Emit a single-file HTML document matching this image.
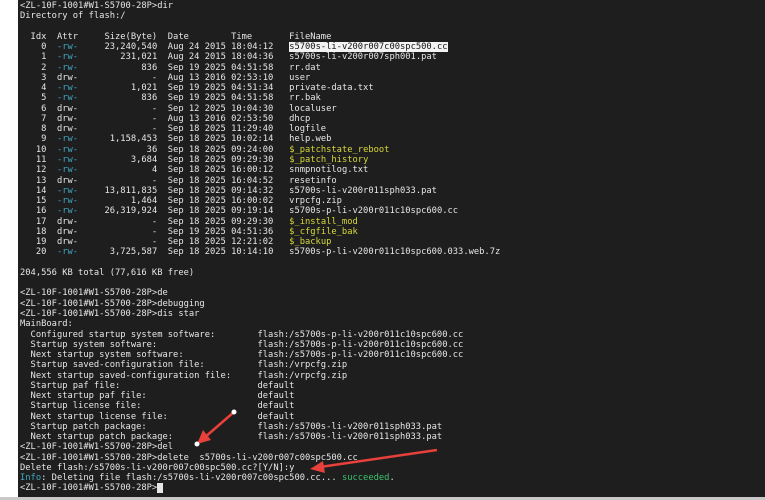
<!DOCTYPE html>
<html><head><meta charset="utf-8"><style>
html,body{margin:0;padding:0;}
body{width:765px;height:500px;overflow:hidden;position:relative;background:#1e1e1e;}
.l{position:absolute;left:0;top:0;width:18px;height:500px;background:#fff;}
.b{position:absolute;left:0;top:497px;width:765px;height:3px;background:#c8c8c8;}
pre{position:absolute;left:20px;top:1px;margin:0;font-family:"DejaVu Sans Mono","Liberation Mono",monospace;font-size:8.77px;line-height:10.26px;color:#e6e6e6;}
.c{color:#3fa7c0}.y{color:#d7d73a}.g{color:#3cc06a}
.h{background:#f2f2f2;color:#111}
.cur{background:#e6e6e6;}
svg{position:absolute;left:0;top:0;}
</style></head><body>
<div class="l"></div><div class="b"></div>
<pre>&lt;ZL-10F-1001#W1-S5700-28P&gt;dir
Directory of flash:/

  Idx  Attr     Size(Byte)  Date        Time       FileName
    0  <span class="c">-rw-</span>     23,240,540  Aug 24 2015 18:04:12   <span class="h">s5700s-li-v200r007c00spc500.cc</span>
    1  <span class="c">-rw-</span>        231,021  Aug 24 2015 18:04:36   s5700s-li-v200r007sph001.pat
    2  <span class="c">-rw-</span>            836  Sep 19 2025 04:51:58   rr.dat
    3  drw-              -  Aug 13 2016 02:53:10   user
    4  <span class="c">-rw-</span>          1,021  Sep 19 2025 04:51:34   private-data.txt
    5  <span class="c">-rw-</span>            836  Sep 19 2025 04:51:58   rr.bak
    6  drw-              -  Sep 12 2025 10:04:30   localuser
    7  drw-              -  Aug 13 2016 02:53:50   dhcp
    8  drw-              -  Sep 18 2025 11:29:40   logfile
    9  <span class="c">-rw-</span>      1,158,453  Sep 18 2025 10:02:14   help.web
   10  <span class="c">-rw-</span>             36  Sep 18 2025 09:24:00   <span class="y">$_patchstate_reboot</span>
   11  <span class="c">-rw-</span>          3,684  Sep 18 2025 09:29:30   <span class="y">$_patch_history</span>
   12  <span class="c">-rw-</span>              4  Sep 18 2025 16:00:12   snmpnotilog.txt
   13  drw-              -  Sep 18 2025 16:04:52   resetinfo
   14  <span class="c">-rw-</span>     13,811,835  Sep 18 2025 09:14:32   s5700s-li-v200r011sph033.pat
   15  <span class="c">-rw-</span>          1,464  Sep 18 2025 16:00:02   vrpcfg.zip
   16  <span class="c">-rw-</span>     26,319,924  Sep 18 2025 09:19:14   s5700s-p-li-v200r011c10spc600.cc
   17  drw-              -  Sep 18 2025 09:29:30   <span class="y">$_install_mod</span>
   18  drw-              -  Sep 19 2025 04:51:36   <span class="y">$_cfgfile_bak</span>
   19  drw-              -  Sep 18 2025 12:21:02   <span class="y">$_backup</span>
   20  <span class="c">-rw-</span>      3,725,587  Sep 18 2025 10:14:10   s5700s-p-li-v200r011c10spc600.033.web.7z

204,556 KB total (77,616 KB free)

&lt;ZL-10F-1001#W1-S5700-28P&gt;de
&lt;ZL-10F-1001#W1-S5700-28P&gt;debugging
&lt;ZL-10F-1001#W1-S5700-28P&gt;dis star
MainBoard:
  Configured startup system software:        flash:/s5700s-p-li-v200r011c10spc600.cc
  Startup system software:                   flash:/s5700s-p-li-v200r011c10spc600.cc
  Next startup system software:              flash:/s5700s-p-li-v200r011c10spc600.cc
  Startup saved-configuration file:          flash:/vrpcfg.zip
  Next startup saved-configuration file:     flash:/vrpcfg.zip
  Startup paf file:                          default
  Next startup paf file:                     default
  Startup license file:                      default
  Next startup license file:                 default
  Startup patch package:                     flash:/s5700s-li-v200r011sph033.pat
  Next startup patch package:                flash:/s5700s-li-v200r011sph033.pat
&lt;ZL-10F-1001#W1-S5700-28P&gt;del
&lt;ZL-10F-1001#W1-S5700-28P&gt;delete  s5700s-li-v200r007c00spc500.cc
Delete flash:/s5700s-li-v200r007c00spc500.cc?[Y/N]:y
<span class="c">Info</span>: Deleting file flash:/s5700s-li-v200r007c00spc500.cc... <span class="g">succeeded</span>.
&lt;ZL-10F-1001#W1-S5700-28P&gt;<span class="cur"> </span></pre>
<svg width="765" height="500">
<line x1="234" y1="412" x2="204" y2="438" stroke="#e8403a" stroke-width="2.5"/>
<polygon points="197,444 203,430 211,440" fill="#e8403a"/>
<circle cx="234" cy="412" r="2.5" fill="#fff"/>
<circle cx="197" cy="444" r="2.5" fill="#fff"/>
<line x1="437" y1="450" x2="320" y2="467" stroke="#e8403a" stroke-width="2.5"/>
<polygon points="310,469 323,461 325,473" fill="#e8403a"/>
</svg>
</body></html>
